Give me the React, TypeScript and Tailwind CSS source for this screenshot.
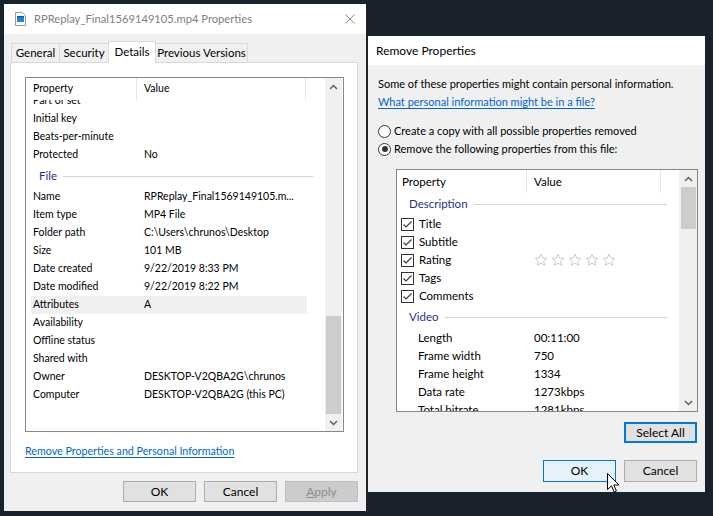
import React from 'react'

type Row = { k: string; v?: string; group?: boolean; hl?: boolean }

const leftRows: Row[] = [
  { k: 'Part of set' },
  { k: 'Initial key' },
  { k: 'Beats-per-minute' },
  { k: 'Protected', v: 'No' },
  { k: 'File', group: true },
  { k: 'Name', v: 'RPReplay_Final1569149105.m...' },
  { k: 'Item type', v: 'MP4 File' },
  { k: 'Folder path', v: 'C:\\Users\\chrunos\\Desktop' },
  { k: 'Size', v: '101 MB' },
  { k: 'Date created', v: '9/22/2019 8:33 PM' },
  { k: 'Date modified', v: '9/22/2019 8:22 PM' },
  { k: 'Attributes', v: 'A', hl: true },
  { k: 'Availability' },
  { k: 'Offline status' },
  { k: 'Shared with' },
  { k: 'Owner', v: 'DESKTOP-V2QBA2G\\chrunos' },
  { k: 'Computer', v: 'DESKTOP-V2QBA2G (this PC)' },
]

const checkRows = ['Title', 'Subtitle', 'Rating', 'Tags', 'Comments']
const videoRows = [
  ['Length', '00:11:00'],
  ['Frame width', '750'],
  ['Frame height', '1334'],
  ['Data rate', '1273kbps'],
  ['Total bitrate', '1281kbps'],
]

const Chevron = ({ down }: { down?: boolean }) => (
  <svg width="9" height="6" viewBox="0 0 9 6" className={down ? 'rotate-180' : ''}>
    <path d="M1 5 L4.5 1.5 L8 5" fill="none" stroke="#606060" strokeWidth="1.5" />
  </svg>
)

const Checkbox = () => (
  <svg width="13" height="13" viewBox="0 0 13 13" className="shrink-0">
    <rect x="0.5" y="0.5" width="12" height="12" fill="#fff" stroke="#333" />
    <path d="M2.5 6.5 L5 9 L10.5 3.5" fill="none" stroke="#333" strokeWidth="1.1" />
  </svg>
)

const Radio = ({ on }: { on?: boolean }) => (
  <span className="w-[13px] h-[13px] rounded-full border border-[#333] bg-white flex items-center justify-center shrink-0">
    {on && <span className="w-[6px] h-[6px] rounded-full bg-[#333]" />}
  </span>
)

const Star = () => (
  <svg width="14" height="14" viewBox="0 0 24 24">
    <path d="M12 2 L14.9 8.6 L22 9.3 L16.6 14 L18.2 21 L12 17.3 L5.8 21 L7.4 14 L2 9.3 L9.1 8.6 Z" fill="none" stroke="#c4c4c4" strokeWidth="1.5" strokeLinejoin="round" />
  </svg>
)

const Group = ({ label }: { label: string }) => (
  <div className="flex items-center gap-[6px] text-[#1e3287]">
    <span>{label}</span>
    <span className="flex-1 h-px bg-[#c9d5e3]" />
  </div>
)

function PropertiesWindow() {
  return (
    <div className="absolute left-[4px] top-[4px] w-[362px] h-[507px] bg-[#f0f0f0] flex flex-col">
      {/* title bar */}
      <div className="h-[30px] bg-white flex items-center pl-[11px] pr-[10px] shrink-0">
        <svg width="11" height="14" viewBox="0 0 11 14" className="mr-[8px]">
          <path d="M0.5 0.5 H7.5 L10.5 3.5 V13.5 H0.5 Z" fill="#fff" stroke="#9a9a9a" />
          <rect x="2" y="4" width="7" height="6" fill="#1e88d8" />
          <rect x="2" y="4" width="7" height="1.5" fill="#0d5ea8" />
        </svg>
        <span className="text-[11.2px] text-[#808080] flex-1 whitespace-nowrap">RPReplay_Final1569149105.mp4 Properties</span>
        <svg width="10" height="10" viewBox="0 0 10 10" className="mr-[1px]">
          <path d="M0.5 0.5 L9.5 9.5 M9.5 0.5 L0.5 9.5" stroke="#8a8a8a" strokeWidth="1" />
        </svg>
      </div>

      <div className="flex-1 flex flex-col pl-[6px] pr-[8px]">
        {/* tabs */}
        <div className="flex items-end h-[21px] mt-[7px] pl-[1px] text-[11.5px] text-black">
          <div className="h-[19px] w-[49px] border border-b-0 border-[#d9d9d9] flex items-center justify-center">General</div>
          <div className="h-[19px] w-[50px] -ml-px border border-b-0 border-[#d9d9d9] flex items-center justify-center">Security</div>
          <div className="h-[22px] w-[48px] -ml-px -mb-px border border-b-0 border-[#d9d9d9] bg-white flex items-center justify-center relative z-10 pb-[2px]">Details</div>
          <div className="h-[19px] w-[93px] -ml-px border border-b-0 border-[#d9d9d9] flex items-center justify-center">Previous Versions</div>
        </div>

        {/* tab panel */}
        <div className="h-[411px] bg-white border border-[#d9d9d9] flex flex-col pl-[14px] pt-[14px]">
          <div className="w-[319px] h-[355px] border border-[#828790] flex text-[10.5px] text-black">
            <div className="w-[299px] flex flex-col">
              <div className="h-[22px] flex shrink-0">
                <div className="w-[111px] border-r border-[#e5e5e5] pl-[7px] flex items-center">Property</div>
                <div className="w-[169px] border-r border-[#e5e5e5] pl-[7px] flex items-center">Value</div>
              </div>
              <div className="flex-1 overflow-hidden">
                <div className="-mt-[8px]">
                  {leftRows.map((r) =>
                    r.group ? (
                      <div key={r.k} className="h-[24px] pl-[13px] pr-[12px] flex items-center text-[11.5px]">
                        <div className="flex-1"><Group label={r.k} /></div>
                      </div>
                    ) : (
                      <div key={r.k} className={`h-[18px] ml-[5px] w-[276px] flex items-center ${r.hl ? 'bg-[#f0f0f0]' : ''}`}>
                        <span className="w-[113px] pl-[2px] whitespace-nowrap">{r.k}</span>
                        <span className="whitespace-nowrap">{r.v}</span>
                      </div>
                    )
                  )}
                </div>
              </div>
            </div>
            {/* scrollbar */}
            <div className="w-[17px] bg-[#f0f0f0] flex flex-col items-center">
              <div className="h-[17px] flex items-center justify-center"><Chevron /></div>
              <div className="h-[221px]" />
              <div className="w-[15px] h-[98px] bg-[#cdcdcd]" />
              <div className="flex-1 flex items-center justify-center"><Chevron down /></div>
            </div>
          </div>
          <div className="mt-[12px] text-[10.7px] text-[#0066cc] underline underline-offset-[2px] leading-[14px] whitespace-nowrap">
            Remove Properties and Personal Information
          </div>
        </div>

        {/* buttons */}
        <div className="flex justify-end gap-[8px] mt-[8px] text-[12px]">
          <button className="w-[73px] h-[21px] bg-[#e1e1e1] border border-[#adadad] text-black">OK</button>
          <button className="w-[73px] h-[21px] bg-[#e1e1e1] border border-[#adadad] text-black">Cancel</button>
          <button className="w-[73px] h-[21px] bg-[#cccccc] border border-[#bfbfbf] text-[#8c8c8c]"><span className="underline">A</span>pply</button>
        </div>
      </div>
    </div>
  )
}

function RemoveDialog() {
  return (
    <div className="absolute left-[368px] top-[36px] w-[337px] h-[456px] bg-[#f0f0f0] flex flex-col text-[11px] text-black">
      <div className="h-[29px] bg-white flex items-center pl-[8px] shrink-0 text-[12px]">Remove Properties</div>
      <div className="flex-1 flex flex-col pl-[10px] pr-[8px] pt-[11px]">
        <div className="h-[16px] leading-[16px] whitespace-nowrap">Some of these properties might contain personal information.</div>
        <div className="h-[17px] leading-[17px] mt-[1px] text-[#0066cc] underline underline-offset-[2px] whitespace-nowrap">What personal information might be in a file?</div>
        <div className="h-[18px] mt-[12px] flex items-center gap-[3px] whitespace-nowrap"><Radio />Create a copy with all possible properties removed</div>
        <div className="h-[18px] flex items-center gap-[3px] whitespace-nowrap"><Radio on />Remove the following properties from this file:</div>

        <div className="ml-[18px] mt-[11px] w-[302px] h-[243px] bg-white border border-[#828790] flex text-[11.5px]">
          <div className="w-[282px] flex flex-col">
            <div className="h-[23px] flex shrink-0">
              <div className="w-[130px] border-r border-[#e5e5e5] pl-[5px] flex items-center">Property</div>
              <div className="w-[134px] border-r border-[#e5e5e5] pl-[7px] flex items-center">Value</div>
            </div>
            <div className="flex-1 overflow-hidden">
              <div className="h-[22px] pl-[12px] pr-[12px] flex items-center">
                <div className="flex-1"><Group label="Description" /></div>
              </div>
              {checkRows.map((k) => (
                <div key={k} className="h-[18px] flex items-center">
                  <div className="w-[137px] pl-[4px] flex items-center gap-[5px]"><Checkbox />{k}</div>
                  {k === 'Rating' && (
                    <div className="flex gap-[3px]"><Star /><Star /><Star /><Star /><Star /></div>
                  )}
                </div>
              ))}
              <div className="h-[24px] pl-[12px] pr-[12px] flex items-center">
                <div className="flex-1"><Group label="Video" /></div>
              </div>
              {videoRows.map(([k, v]) => (
                <div key={k} className="h-[18px] flex items-center">
                  <div className="w-[137px] pl-[21px]">{k}</div>
                  <div>{v}</div>
                </div>
              ))}
            </div>
          </div>
          <div className="w-[18px] bg-[#f0f0f0] flex flex-col items-center">
            <div className="h-[17px] flex items-center justify-center"><Chevron /></div>
            <div className="w-[15px] h-[42px] bg-[#cdcdcd]" />
            <div className="flex-1" />
            <div className="h-[17px] flex items-center justify-center"><Chevron down /></div>
          </div>
        </div>

        <div className="flex justify-end mt-[10px] text-[12px]">
          <button className="w-[73px] h-[21px] bg-[#e1e1e1] border-2 border-[#0078d7]">Select All</button>
        </div>
        <div className="flex justify-end gap-[8px] mt-[17px] text-[12px]">
          <button className="w-[73px] h-[22px] bg-[#e5f1fb] border border-[#0078d7]">OK</button>
          <button className="w-[73px] h-[22px] bg-[#e1e1e1] border border-[#adadad]">Cancel</button>
        </div>
      </div>
    </div>
  )
}

export default function App() {
  return (
    <div className="w-[713px] h-[516px] bg-[#19222b] relative overflow-hidden font-['Lato',sans-serif]">
      <PropertiesWindow />
      <RemoveDialog />
      {/* mouse cursor */}
      <svg width="13" height="21" viewBox="0 0 13 21" className="absolute left-[607px] top-[473px]">
        <path d="M0.5 0.5 L0.5 16.5 L4.5 12.8 L7.2 19 L9.4 18 L6.8 12 L12 12 Z" fill="#fff" stroke="#000" strokeWidth="1" strokeLinejoin="round" />
      </svg>
    </div>
  )
}
